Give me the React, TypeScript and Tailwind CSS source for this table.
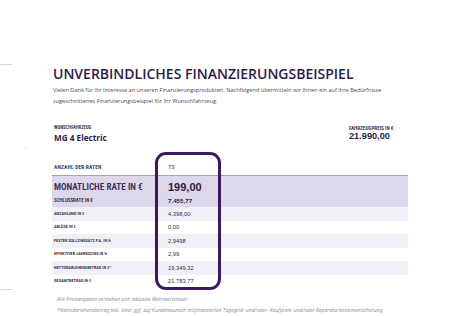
const rows: { label: string; value: string; shade: boolean; h: string }[] = [
  { label: "ANZAHLUNG IN €", value: "4.398,00", shade: true, h: "h-[14px]" },
  { label: "ABLÖSE IN €", value: "0,00", shade: false, h: "h-[13px]" },
  { label: "FESTER SOLLZINSSATZ P.A. IN %", value: "2,9498", shade: true, h: "h-[14px]" },
  { label: "EFFEKTIVER JAHRESZINS IN %", value: "2,99", shade: false, h: "h-[13px]" },
  { label: "NETTODARLEHENSBETRAG IN €*", value: "19.349,32", shade: true, h: "h-[14px]" },
  { label: "GESAMTBETRAG IN €", value: "21.783,77", shade: false, h: "h-[13px]" },
];

export default function App() {
  return (
    <div className="relative w-[450px] h-[316px] overflow-hidden bg-white font-['Open_Sans',sans-serif]">
      <div className="absolute left-0 top-[64px] w-[12px] h-px bg-[#d4d4d8]" />
      <div className="absolute left-0 top-[289px] w-[12px] h-px bg-[#d4d4d8]" />
      <div className="absolute left-[25px] top-[148px] w-px h-px bg-[#c8c8cc]" />

      <div className="ml-[52px] w-[356px] pt-[67px] flex flex-col">
        <h1 className="pl-px text-[14px] leading-[14px] font-semibold text-[#2d1b4e] whitespace-nowrap">
          UNVERBINDLICHES FINANZIERUNGSBEISPIEL
        </h1>
        <p className="pl-px mt-[4px] text-[5.6px] leading-[11px] text-[#4a4a52]">
          Vielen Dank für Ihr Interesse an unseren Finanzierungsprodukten. Nachfolgend übermitteln wir Ihnen ein auf Ihre Bedürfnisse
          <br />
          zugeschnittenes Finanzierungsbeispiel für Ihr Wunschfahrzeug.
        </p>

        <div className="mt-[18px] flex items-start">
          <div className="pl-[2px] flex flex-col">
            <span className="text-[4.7px] leading-[6px] font-semibold text-[#2e2844] font-['Roboto_Condensed',sans-serif]">WUNSCHFAHRZEUG</span>
            <span className="mt-[1px] text-[8.2px] leading-[11px] font-bold text-[#2d1b4e]">MG 4 Electric</span>
          </div>
          <div className="ml-auto w-[59px] flex flex-col">
            <span className="text-[5.2px] leading-[6px] font-semibold text-[#2e2844] whitespace-nowrap font-['Roboto_Condensed',sans-serif]">FAHRZEUGPREIS IN €</span>
            <span className="text-[9.2px] leading-[10px] font-bold text-[#2d1b4e] font-['Liberation_Sans',Arial,sans-serif]">21.990,00</span>
          </div>
        </div>

        <div className="relative mt-[17px] w-[356px]">
          <div className="flex items-center h-[15px]">
            <span className="w-[116px] pl-[2px] text-[5.5px] font-semibold tracking-[0.15px] text-[#2e2e3c] font-['Roboto_Condensed',sans-serif]">ANZAHL DER RATEN</span>
            <span className="text-[6px] text-[#333] font-['Liberation_Sans',Arial,sans-serif]">73</span>
          </div>
          <div className="h-[32px] border-t border-[#a7a1b8] bg-[#ddd7ea] flex flex-col">
            <div className="flex items-center h-[19px] pt-[2px]">
              <span className="w-[116px] pl-[2px] text-[9.2px] leading-[12px] font-semibold text-[#3b2a57] whitespace-nowrap font-['Roboto_Condensed',sans-serif]">MONATLICHE RATE IN €</span>
              <span className="text-[11px] leading-[12px] font-bold text-[#2b1a40] font-['Liberation_Sans',Arial,sans-serif]">199,00</span>
            </div>
            <div className="flex items-center h-[12px]">
              <span className="w-[116px] pl-[2px] text-[5px] font-semibold text-[#2e2844] font-['Roboto_Condensed',sans-serif]">SCHLUSSRATE IN €</span>
              <span className="text-[6.2px] font-bold text-[#2b1a40] font-['Liberation_Sans',Arial,sans-serif]">7.455,77</span>
            </div>
          </div>
          {rows.map((r) => (
            <div key={r.label} className={`flex items-center ${r.h} ${r.shade ? "bg-[#f1eff7]" : "bg-white"}`}>
              <span className="w-[116px] pl-[2px] text-[4.3px] font-semibold text-[#2e2e3c] whitespace-nowrap font-['Roboto_Condensed',sans-serif]">{r.label}</span>
              <span className="text-[5.8px] text-[#333] font-['Liberation_Sans',Arial,sans-serif]">{r.value}</span>
            </div>
          ))}
          <div className="absolute left-[103px] top-[-8px] w-[66px] h-[138px] rounded-[11px] border-[3px] border-[#3a1a5c]" />
        </div>

        <div className="mt-[6px] pl-[5px] text-[5.1px] leading-[11px] italic text-[#8a8a98] whitespace-nowrap">
          <div>Alle Preisangaben verstehen sich inklusive Mehrwertsteuer.</div>
          <div>*Nettodarlehensbetrag inkl. einer ggf. auf Kundenwunsch mitfinanzierten Tagegeld- und/oder- Kaufpreis- und/oder Reparaturkostenversicherung</div>
        </div>
      </div>
    </div>
  );
}
